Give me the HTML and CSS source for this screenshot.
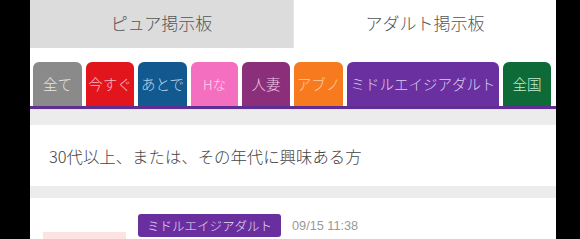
FILE: index.html
```html
<!DOCTYPE html>
<html lang="ja">
<head>
<meta charset="utf-8">
<link rel="stylesheet" href="styles.css">
</head>
<body>
<div class="page">
  <div class="boards">
    <div class="board board-off">ピュア掲示板</div>
    <div class="board board-on">アダルト掲示板</div>
  </div>
  <div class="cats">
    <div class="cat c-all">全て</div>
    <div class="cat c-now">今すぐ</div>
    <div class="cat c-later">あとで</div>
    <div class="cat c-h">Hな</div>
    <div class="cat c-wife">人妻</div>
    <div class="cat c-abno">アブノ</div>
    <div class="cat c-middle">ミドルエイジアダルト</div>
    <div class="cat c-nation">全国</div>
  </div>
  <div class="catline"></div>
  <div class="band"></div>
  <div class="desc">30代以上、または、その年代に興味ある方</div>
  <div class="band band2"></div>
  <div class="post">
    <div class="thumb"></div>
    <div class="meta">
      <span class="tag">ミドルエイジアダルト</span>
      <span class="date">09/15 11:38</span>
    </div>
  </div>
</div>
</body>
</html>
```

FILE: styles.css
```css
html, body {
  margin: 0;
  padding: 0;
  background: #000;
  height: 239px;
  overflow: hidden;
}
.page {
  margin-left: 30px;
  width: 526px;
  height: 239px;
  background: #fff;
  font-family: "Noto Sans CJK JP", "Liberation Sans", sans-serif;
  font-weight: 300;
  overflow: hidden;
}
.boards {
  display: flex;
  height: 48px;
}
.board {
  flex: 1;
  display: flex;
  align-items: center;
  justify-content: center;
  font-size: 17px;
  color: #555;
  padding-bottom: 4px;
  box-sizing: border-box;
}
.board-off {
  background: #dcdcdc;
  flex: 0 0 263px;
}
.board-on {
  background: #fff;
  border-left: 1px solid #e6e6e6;
}
.cats {
  display: flex;
  gap: 4px;
  padding-left: 3px;
  margin-top: 14px;
  height: 44px;
}
.cat {
  height: 44px;
  border-radius: 6px 6px 0 0;
  display: flex;
  align-items: center;
  justify-content: center;
  font-size: 14.5px;
  white-space: nowrap;
  padding-bottom: 1px;
  box-sizing: border-box;
}
.c-all { width: 49px; background: #8a8a8a; color: #e6e6e6; }
.c-now { width: 48px; background: #e2151c; color: #ffb8c0; }
.c-later { width: 49px; background: #12598f; color: #b9d3ec; }
.c-h { width: 47px; background: #f56fc1; color: #ffd3ef; font-size: 13.5px; }
.c-wife { width: 48px; background: #8c2f7a; color: #f2c6e6; }
.c-abno { width: 49px; background: #f87a1f; color: #ffcca4; }
.c-middle { width: 152px; background: #6b30a0; color: #dccdf0; }
.c-nation { width: 48px; background: #0e6a36; color: #c6ead2; }
.catline {
  height: 3px;
  background: #5f2e92;
}
.band {
  height: 15px;
  background: #ececec;
  border-top: 1px solid #eadcf2;
}
.band2 {
  height: 12px;
  border-top: none;
}
.desc {
  height: 61px;
  display: flex;
  align-items: center;
  padding-left: 19px;
  font-size: 16.4px;
  color: #444;
}
.post {
  position: relative;
  height: 41px;
}
.thumb {
  position: absolute;
  left: 13px;
  top: 34px;
  width: 83px;
  height: 20px;
  background: #fde2e2;
}
.meta {
  display: flex;
  align-items: center;
  padding-left: 108px;
  padding-top: 16px;
}
.tag {
  display: inline-flex;
  align-items: center;
  height: 23px;
  padding: 0 9px;
  background: #6a2f9f;
  color: #e8def5;
  font-size: 12.5px;
  border-radius: 3px;
}
.date {
  margin-left: 11px;
  font-size: 12.7px;
  color: #999;
  font-family: "Liberation Sans", sans-serif;
}
```
